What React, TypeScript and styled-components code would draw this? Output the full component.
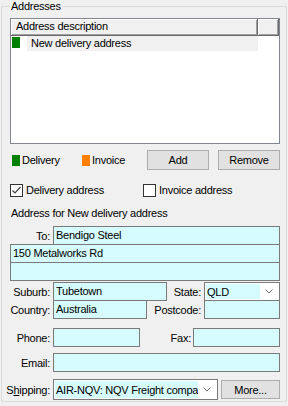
import React from "react";
import styled, { createGlobalStyle } from "styled-components";

const GlobalStyle = createGlobalStyle`
  body {
    margin: 0;
    background: #f0f0f0;
    font-family: "Liberation Sans", Arial, sans-serif;
    font-size: 11px;
    letter-spacing: -0.25px;
    color: #000;
  }
`;

const Page = styled.div`
  width: 288px;
  height: 406px;
  padding: 0 0 0 1px;
  box-sizing: border-box;
  overflow: hidden;
`;

const GroupBox = styled.fieldset`
  width: 286px;
  height: 402px;
  box-sizing: border-box;
  margin: 0;
  padding: 0 6px 0 8px;
  border: 1px solid #dcdcdc;
  display: flex;
  flex-direction: column;
`;

const GroupTitle = styled.legend`
  padding: 0 1px;
  margin-left: 0;
  line-height: 13px;
  height: 13px;
`;

const ListView = styled.div`
  margin-top: 5px;
  width: 270px;
  height: 126px;
  box-sizing: border-box;
  border: 1px solid #828790;
  background: #fff;
`;

const HeaderRow = styled.div`
  display: flex;
  height: 17px;
`;

const HeaderCell = styled.div<{ $w: number }>`
  width: ${(p) => p.$w}px;
  box-sizing: border-box;
  background: #f0f0f0;
  padding-left: 5px;
  line-height: 15px;
  border-right: 1px solid #696969;
  border-bottom: 1px solid #696969;
  box-shadow: inset 1px 1px #fff, inset -1px -1px #a0a0a0;
  white-space: nowrap;
`;

const ItemRow = styled.div`
  display: flex;
  height: 15px;
  align-items: stretch;
`;

const ItemIcon = styled.div`
  width: 16px;
  padding: 1px 0 0 1px;
  box-sizing: border-box;
`;

const Swatch = styled.span<{ $color: string }>`
  display: inline-block;
  width: 8px;
  height: 11px;
  background: ${(p) => p.$color};
`;

const ItemLabel = styled.div`
  width: 231px;
  background: #f0f0f0;
  padding-left: 4px;
  box-sizing: border-box;
  line-height: 15px;
`;

const LegendRow = styled.div`
  display: flex;
  align-items: center;
  margin-top: 6px;
  height: 20px;
`;

const LegendItem = styled.div<{ $w: number }>`
  width: ${(p) => p.$w}px;
  display: flex;
  align-items: center;
  gap: 2px;
`;

const Button = styled.button<{ $w: number }>`
  width: ${(p) => p.$w}px;
  height: 20px;
  padding: 0;
  margin: 0;
  background: #e1e1e1;
  border: 1px solid #adadad;
  font: inherit;
  letter-spacing: inherit;
  color: #000;
`;

const CheckRow = styled.div`
  display: flex;
  margin-top: 14px;
  height: 13px;
  align-items: center;
`;

const CheckItem = styled.label<{ $w: number }>`
  width: ${(p) => p.$w}px;
  display: flex;
  align-items: center;
  gap: 3px;
  line-height: 13px;
`;

const Box = styled.span`
  width: 13px;
  height: 13px;
  box-sizing: border-box;
  border: 1px solid #333;
  background: #fff;
  display: flex;
  align-items: center;
  justify-content: center;
`;

const SectionLabel = styled.div`
  margin-top: 10px;
  margin-left: 1px;
  line-height: 13px;
`;

const Form = styled.div`
  margin-top: 6px;
  display: flex;
  flex-direction: column;
`;

const FieldRow = styled.div<{ $gap?: number }>`
  display: flex;
  align-items: center;
  margin-top: ${(p) => p.$gap ?? 0}px;
`;

const Label = styled.div<{ $w: number; $pr?: number }>`
  width: ${(p) => p.$w}px;
  flex: none;
  padding-right: ${(p) => p.$pr ?? 3}px;
  box-sizing: border-box;
  display: flex;
  justify-content: flex-end;
  white-space: nowrap;
`;

const Input = styled.div<{ $w: number }>`
  width: ${(p) => p.$w}px;
  height: 19px;
  box-sizing: border-box;
  border: 1px solid #7a7a7a;
  background: #d5fbfd;
  padding-left: 2px;
  line-height: 17px;
  white-space: nowrap;
  overflow: hidden;
`;

const Combo = styled.div<{ $w: number; $h?: number }>`
  width: ${(p) => p.$w}px;
  height: ${(p) => p.$h ?? 19}px;
  box-sizing: border-box;
  border: 1px solid #7a7a7a;
  background: #fff;
  padding: 1px;
  display: flex;
`;

const ComboValue = styled.div`
  flex: 1;
  background: #d5fbfd;
  padding-left: 1px;
  display: flex;
  align-items: center;
  white-space: nowrap;
  overflow: hidden;
`;

const ComboArrow = styled.div`
  width: 18px;
  display: flex;
  align-items: center;
  justify-content: center;
`;

const Chevron = () => (
  <svg width="8" height="5" viewBox="0 0 8 5">
    <path d="M0.5 0.5 L4 4 L7.5 0.5" fill="none" stroke="#707070" strokeWidth="1" />
  </svg>
);

export default function App() {
  return (
    <Page>
      <GlobalStyle />
      <GroupBox>
        <GroupTitle>Addresses</GroupTitle>
        <ListView>
          <HeaderRow>
            <HeaderCell $w={247}>Address description</HeaderCell>
            <HeaderCell $w={21} />
          </HeaderRow>
          <ItemRow>
            <ItemIcon>
              <Swatch $color="#008000" />
            </ItemIcon>
            <ItemLabel>New delivery address</ItemLabel>
          </ItemRow>
        </ListView>

        <LegendRow>
          <LegendItem $w={70} style={{ marginLeft: 2 }}>
            <Swatch $color="#008000" />
            Delivery
          </LegendItem>
          <LegendItem $w={65}>
            <Swatch $color="#ff8000" />
            Invoice
          </LegendItem>
          <Button $w={62} style={{ marginRight: 9 }}>Add</Button>
          <Button $w={62}>Remove</Button>
        </LegendRow>

        <CheckRow>
          <CheckItem $w={133}>
            <Box>
              <svg width="11" height="11" viewBox="0 0 11 11">
                <path d="M1.5 5.5 L4 8 L9.5 2" fill="none" stroke="#404040" strokeWidth="1.2" />
              </svg>
            </Box>
            Delivery address
          </CheckItem>
          <CheckItem $w={130}>
            <Box />
            Invoice address
          </CheckItem>
        </CheckRow>

        <SectionLabel>Address for New delivery address</SectionLabel>

        <Form>
          <FieldRow>
            <Label $w={43}>To:</Label>
            <Input $w={227}>Bendigo Steel</Input>
          </FieldRow>
          <FieldRow $gap={-1}>
            <Input $w={270}>150 Metalworks Rd</Input>
          </FieldRow>
          <FieldRow $gap={-1}>
            <Input $w={270} />
          </FieldRow>
          <FieldRow $gap={1}>
            <Label $w={43}>Suburb:</Label>
            <Input $w={114}>Tubetown</Input>
            <Label $w={37}>State:</Label>
            <Combo $w={76}>
              <ComboValue>QLD</ComboValue>
              <ComboArrow>
                <Chevron />
              </ComboArrow>
            </Combo>
          </FieldRow>
          <FieldRow $gap={-1}>
            <Label $w={43}>Country:</Label>
            <Input $w={94}>Australia</Input>
            <Label $w={57}>Postcode:</Label>
            <Input $w={76} />
          </FieldRow>
          <FieldRow $gap={9}>
            <Label $w={43}>Phone:</Label>
            <Input $w={87} />
            <Label $w={53} $pr={2}>Fax:</Label>
            <Input $w={87} />
          </FieldRow>
          <FieldRow $gap={6}>
            <Label $w={43}>Email:</Label>
            <Input $w={227} />
          </FieldRow>
          <FieldRow $gap={7}>
            <Label $w={43}>
              <span>
                S<u>h</u>ipping:
              </span>
            </Label>
            <Combo $w={165} $h={21}>
              <ComboValue>AIR-NQV: NQV Freight company</ComboValue>
              <ComboArrow>
                <Chevron />
              </ComboArrow>
            </Combo>
            <Button $w={59} style={{ marginLeft: 3, height: 19 }}>More...</Button>
          </FieldRow>
        </Form>
      </GroupBox>
    </Page>
  );
}
